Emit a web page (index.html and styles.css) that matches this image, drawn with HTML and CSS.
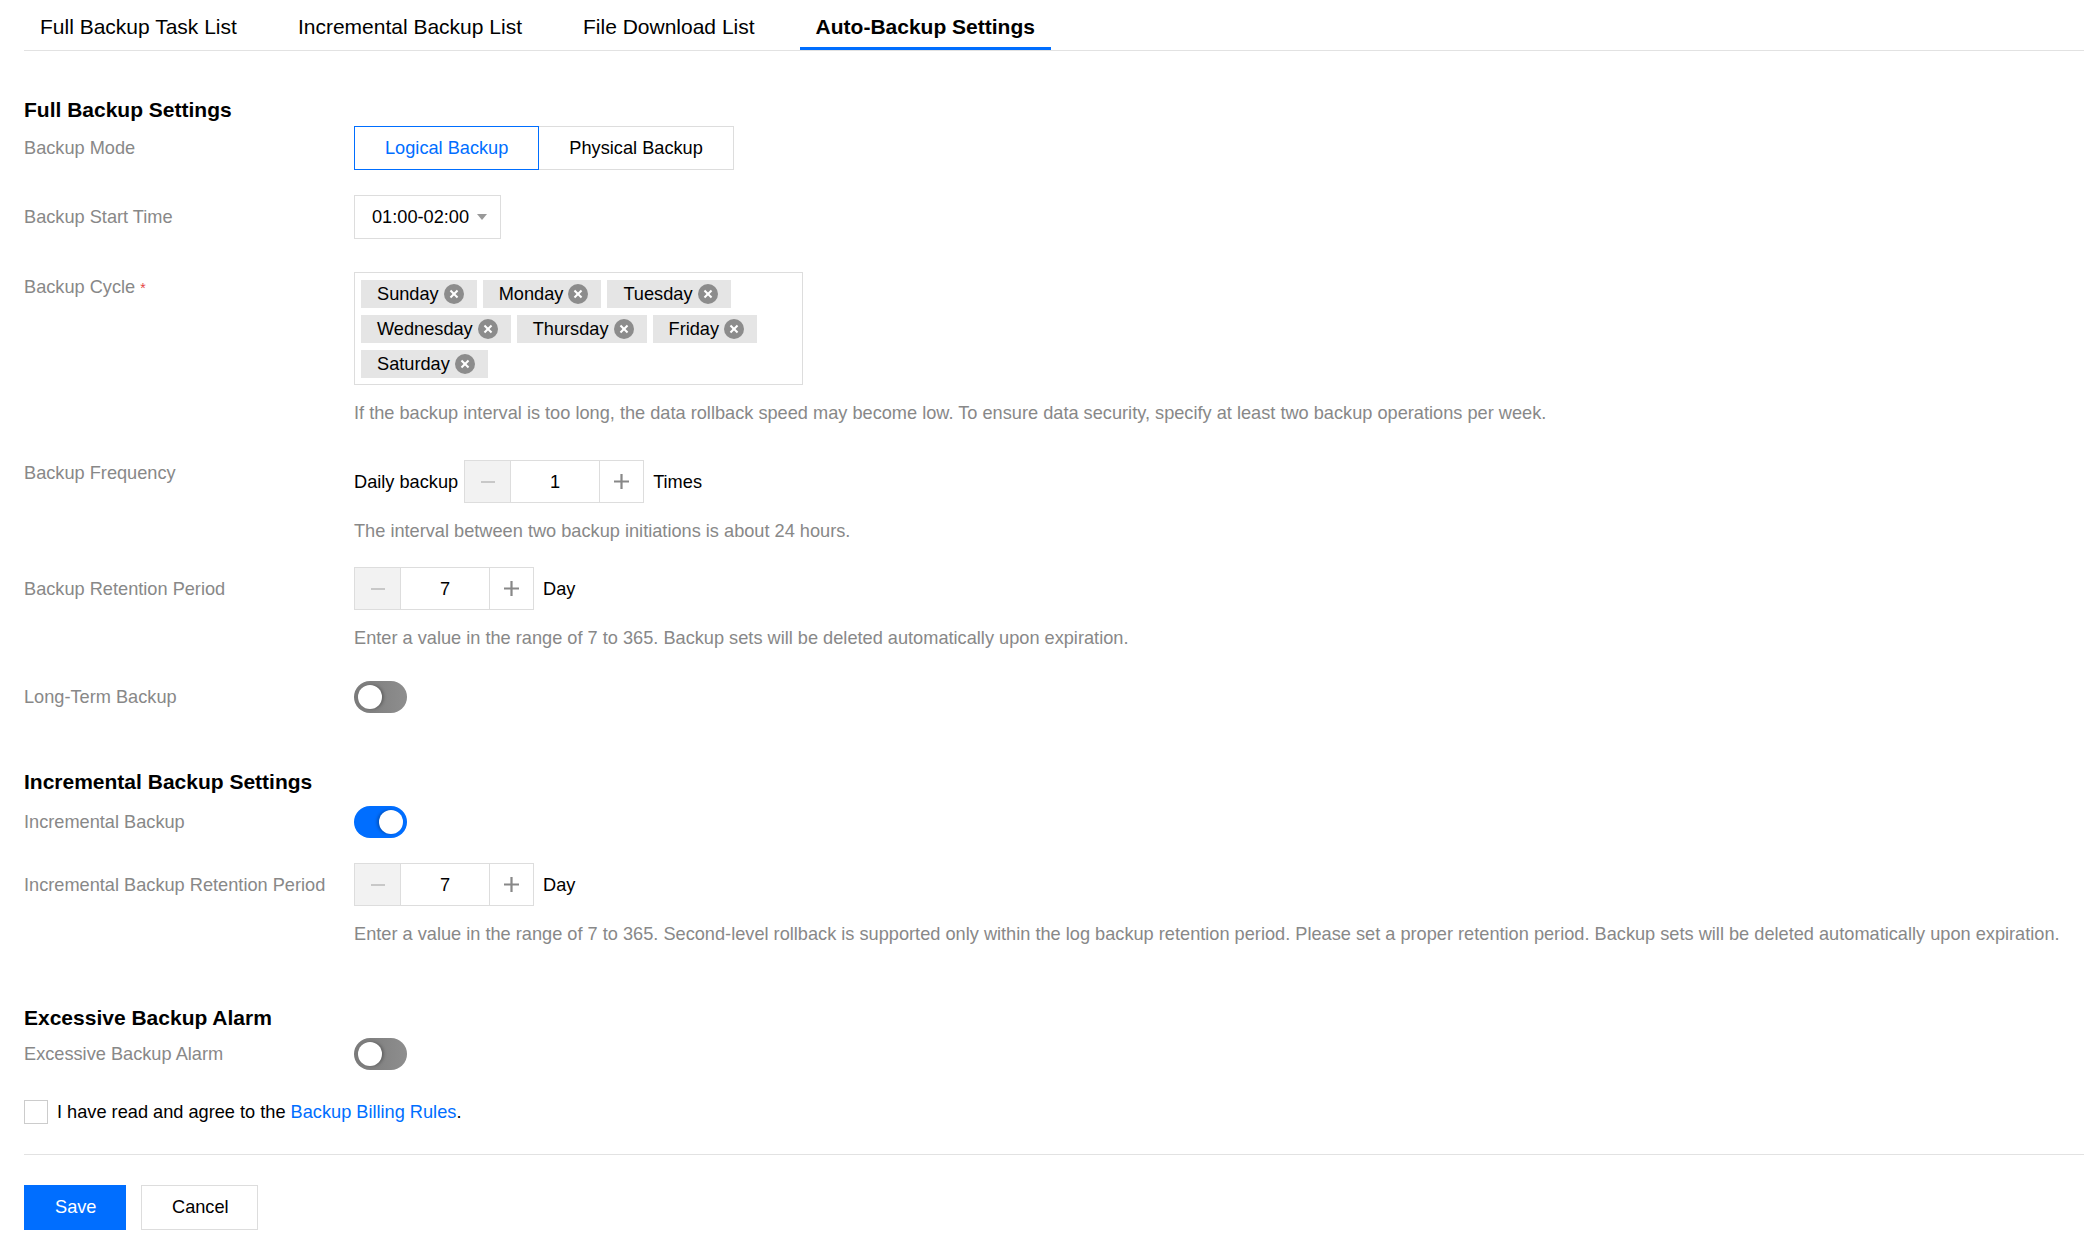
FILE: index.html
```html
<!DOCTYPE html>
<html lang="en">
<head>
    <meta charset="UTF-8">
    <title>Auto-Backup Settings</title>
    <link rel="stylesheet" href="styles.css">
</head>
<body>
    <div class="page">
        <div class="tabs">
            <a class="tab">Full Backup Task List</a>
            <a class="tab">Incremental Backup List</a>
            <a class="tab">File Download List</a>
            <a class="tab active">Auto-Backup Settings</a>
        </div>

        <!-- full backup -->
        <div class="section first">
            <h2>Full Backup Settings</h2>
            <div class="form-item">
                <div class="label">Backup Mode</div>
                <div class="control">
                    <div class="segment">
                        <button class="seg-btn selected">Logical Backup</button>
                        <button class="seg-btn">Physical Backup</button>
                    </div>
                </div>
            </div>
            <div class="form-item">
                <div class="label">Backup Start Time</div>
                <div class="control">
                    <div class="select">
                        <span>01:00-02:00</span>
                        <svg class="caret" width="10" height="6" viewBox="0 0 10 6"><path d="M0 0h10L5 6z" fill="#999"/></svg>
                    </div>
                </div>
            </div>
            <div class="form-item top cycle-row">
                <div class="label">Backup Cycle <span class="req">*</span></div>
                <div class="control">
                    <div class="tag-box">
                        <span class="tag">Sunday <i class="tag-x"></i></span>
                        <span class="tag">Monday <i class="tag-x"></i></span>
                        <span class="tag">Tuesday <i class="tag-x"></i></span>
                        <span class="tag">Wednesday <i class="tag-x"></i></span>
                        <span class="tag">Thursday <i class="tag-x"></i></span>
                        <span class="tag">Friday <i class="tag-x"></i></span>
                        <span class="tag">Saturday <i class="tag-x"></i></span>
                    </div>
                    <p class="help">If the backup interval is too long, the data rollback speed may become low. To ensure data security, specify at least two backup operations per week.</p>
                </div>
            </div>
            <div class="form-item top freq-row">
                <div class="label">Backup Frequency</div>
                <div class="control">
                    <div class="inline">
                        <span class="unit-before">Daily backup</span>
                        <div class="stepper">
                            <span class="step minus"><svg width="14" height="2" viewBox="0 0 14 2"><rect width="14" height="2" fill="#c8c8c8"/></svg></span>
                            <span class="step-value">1</span>
                            <span class="step plus"><svg width="15" height="15" viewBox="0 0 15 15"><path d="M0 7.5h15M7.5 0v15" stroke="#888" stroke-width="2.2"/></svg></span>
                        </div>
                        <span class="unit">Times</span>
                    </div>
                    <p class="help">The interval between two backup initiations is about 24 hours.</p>
                </div>
            </div>
            <div class="form-item top">
                <div class="label pad">Backup Retention Period</div>
                <div class="control">
                    <div class="inline">
                        <div class="stepper">
                            <span class="step minus"><svg width="14" height="2" viewBox="0 0 14 2"><rect width="14" height="2" fill="#c8c8c8"/></svg></span>
                            <span class="step-value">7</span>
                            <span class="step plus"><svg width="15" height="15" viewBox="0 0 15 15"><path d="M0 7.5h15M7.5 0v15" stroke="#888" stroke-width="2.2"/></svg></span>
                        </div>
                        <span class="unit">Day</span>
                    </div>
                    <p class="help">Enter a value in the range of 7 to 365. Backup sets will be deleted automatically upon expiration.</p>
                </div>
            </div>
            <div class="form-item spaced">
                <div class="label">Long-Term Backup</div>
                <div class="control"><span class="switch"></span></div>
            </div>
        </div>

        <!-- incremental -->
        <div class="section">
            <h2>Incremental Backup Settings</h2>
            <div class="form-item">
                <div class="label">Incremental Backup</div>
                <div class="control"><span class="switch on"></span></div>
            </div>
            <div class="form-item top">
                <div class="label pad">Incremental Backup Retention Period</div>
                <div class="control">
                    <div class="inline">
                        <div class="stepper">
                            <span class="step minus"><svg width="14" height="2" viewBox="0 0 14 2"><rect width="14" height="2" fill="#c8c8c8"/></svg></span>
                            <span class="step-value">7</span>
                            <span class="step plus"><svg width="15" height="15" viewBox="0 0 15 15"><path d="M0 7.5h15M7.5 0v15" stroke="#888" stroke-width="2.2"/></svg></span>
                        </div>
                        <span class="unit">Day</span>
                    </div>
                    <p class="help">Enter a value in the range of 7 to 365. Second-level rollback is supported only within the log backup retention period. Please set a proper retention period. Backup sets will be deleted automatically upon expiration.</p>
                </div>
            </div>
        </div>

        <!-- alarm -->
        <div class="section alarm">
            <h2>Excessive Backup Alarm</h2>
            <div class="form-item">
                <div class="label">Excessive Backup Alarm</div>
                <div class="control"><span class="switch"></span></div>
            </div>
        </div>

        <label class="agree">
            <span class="checkbox"></span>
            <span>I have read and agree to the <a class="link">Backup Billing Rules</a>.</span>
        </label>

        <div class="footer">
            <button class="btn primary">Save</button>
            <button class="btn">Cancel</button>
        </div>
    </div>
</body>
</html>
```

FILE: styles.css
```css
body {
    margin: 0;
    font-family: "Liberation Sans", Arial, Helvetica, sans-serif;
    font-size: 18.2px;
    line-height: 22px;
    color: #000;
    background-color: #fff;
}
.page {
    padding-left: 24px;
}
.tabs {
    display: flex;
    border-bottom: 1px solid #e2e2e2;
}
.tab {
    padding: 13px 16px 6px;
    margin-right: 29px;
    font-size: 21px;
    line-height: 28px;
    border-bottom: 3px solid transparent;
    cursor: pointer;
}
.tab.active {
    font-weight: bold;
    border-bottom-color: #006eff;
}
.section h2 {
    margin: 0 0 2px;
    font-size: 21px;
    line-height: 28px;
    font-weight: bold;
}
.section {
    margin-top: 55px;
}
.section.first {
    margin-top: 45px;
}
.section.alarm {
    margin-top: 59px;
}
.section + .section h2 {
    margin-bottom: 10px;
}
.section.alarm h2 {
    margin-bottom: 6px;
}
.form-item {
    display: flex;
    align-items: center;
    margin-bottom: 25px;
}
.form-item.top {
    align-items: flex-start;
}
.form-item.spaced {
    margin-top: 32px;
}
.label {
    width: 330px;
    flex-shrink: 0;
    color: #888;
}
.label.pad {
    padding-top: 11px;
}
.cycle-row {
    margin-top: 33px;
}
.cycle-row .label {
    padding-top: 4px;
}
.freq-row {
    margin-top: 36px;
}
.freq-row .label {
    padding-top: 2px;
}
.req {
    color: #e54545;
    font-size: 14px;
}
.control {
    flex: 1;
}
.segment {
    display: flex;
}
.seg-btn {
    height: 44px;
    padding: 0 30px;
    font-family: inherit;
    font-size: 18.2px;
    color: #000;
    background: #fff;
    border: 1px solid #ddd;
    cursor: pointer;
}
.seg-btn.selected {
    color: #006eff;
    border-color: #006eff;
}
.seg-btn + .seg-btn {
    border-left: none;
}
.select {
    display: inline-flex;
    align-items: center;
    box-sizing: border-box;
    width: 147px;
    height: 44px;
    padding-left: 17px;
    border: 1px solid #ddd;
}
.caret {
    margin-left: 8px;
}
.tag-box {
    display: flex;
    flex-wrap: wrap;
    gap: 7px 6px;
    box-sizing: border-box;
    width: 449px;
    padding: 7px 6px 6px;
    border: 1px solid #ddd;
}
.tag {
    display: inline-flex;
    align-items: center;
    height: 28px;
    padding: 0 13px 0 16px;
    background-color: #e5e5e5;
}
.tag-x {
    position: relative;
    display: inline-block;
    width: 20px;
    height: 20px;
    margin-left: 5px;
    border-radius: 50%;
    background-color: #8c8c8c;
}
.tag-x::before, .tag-x::after {
    content: "";
    position: absolute;
    left: 5px;
    top: 9px;
    width: 10px;
    height: 2px;
    background: #fff;
    transform: rotate(45deg);
}
.tag-x::after {
    transform: rotate(-45deg);
}
.help {
    margin: 17px 0 0;
    color: #888;
}
.inline {
    display: flex;
    align-items: center;
}
.unit-before {
    margin-right: 6px;
}
.unit {
    margin-left: 9px;
}
.stepper {
    display: flex;
    height: 43px;
    border: 1px solid #ddd;
    box-sizing: border-box;
}
.step {
    display: flex;
    align-items: center;
    justify-content: center;
    width: 45px;
}
.step.minus {
    background-color: #f2f2f2;
    border-right: 1px solid #ddd;
}
.step.plus {
    width: 43px;
    border-left: 1px solid #ddd;
}
.step-value {
    display: flex;
    align-items: center;
    justify-content: center;
    width: 88px;
}
.switch {
    position: relative;
    display: block;
    width: 53px;
    height: 32px;
    border-radius: 16px;
    background: linear-gradient(90deg, #7a7a7a, #8e8e8e);
}
.switch::after {
    content: "";
    position: absolute;
    left: 4px;
    top: 4px;
    width: 24px;
    height: 24px;
    border-radius: 50%;
    background: #fff;
    box-shadow: 2px 0 3px rgba(0, 0, 0, 0.25);
}
.switch.on {
    background: #006eff;
}
.switch.on::after {
    left: 25px;
    box-shadow: -2px 0 3px rgba(0, 0, 0, 0.25);
}
.agree {
    display: flex;
    align-items: center;
    margin-top: 30px;
}
.checkbox {
    width: 22px;
    height: 22px;
    margin-right: 9px;
    border: 1px solid #ccc;
    background: #fff;
}
.link {
    color: #006eff;
    cursor: pointer;
}
.footer {
    display: flex;
    gap: 15px;
    margin-top: 30px;
    padding-top: 30px;
    border-top: 1px solid #e2e2e2;
}
.btn {
    height: 45px;
    padding: 0 30px;
    font-family: inherit;
    font-size: 18.2px;
    color: #000;
    background: #fff;
    border: 1px solid #ddd;
    cursor: pointer;
}
.btn.primary {
    width: 102px;
    color: #fff;
    background: #006eff;
    border-color: #006eff;
}
.btn + .btn {
    width: 117px;
}
```
